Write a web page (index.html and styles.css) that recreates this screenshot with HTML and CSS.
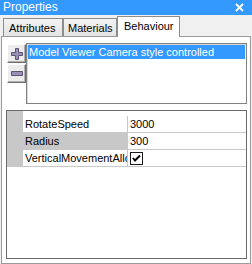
FILE: index.html
```html
<!DOCTYPE html>
<html>
<head>
<meta charset="utf-8">
<link rel="stylesheet" href="styles.css">
</head>
<body>
<div class="window">
  <div class="titlebar">
    <span class="title">Properties</span>
    <svg class="close" width="9" height="9" viewBox="0 0 9 9"><path d="M1 1 L8 8 M8 1 L1 8" stroke="#fff" stroke-width="1.8"/></svg>
  </div>
  <div class="tabstrip">
    <div class="tab t1">Attributes</div>
    <div class="tab t2">Materials</div>
    <div class="tab active">Behaviour</div>
  </div>
  <div class="page">
    <div class="top">
      <div class="buttons">
        <div class="btn">
          <svg width="12" height="12" viewBox="0 0 12 12"><path d="M4.5 0.5 H7.5 V4.5 H11.5 V7.5 H7.5 V11.5 H4.5 V7.5 H0.5 V4.5 H4.5 Z" fill="#9a8fb8" stroke="#5a5470" stroke-width="1"/></svg>
        </div>
        <div class="btn">
          <svg width="12" height="6" viewBox="0 0 12 6"><path d="M0.5 0.5 H11.5 V4.5 H0.5 Z" fill="#9a8fb8" stroke="#5a5470" stroke-width="1"/></svg>
        </div>
      </div>
      <div class="list">
        <div class="item selected">Model Viewer Camera style controlled</div>
      </div>
    </div>
    <div class="grid">
      <div class="row spacer"><div class="margin"></div><div class="name"></div><div class="value"></div></div>
      <div class="row"><div class="margin"></div><div class="name">RotateSpeed</div><div class="value">3000</div></div>
      <div class="row sel"><div class="margin"></div><div class="name">Radius</div><div class="value">300</div></div>
      <div class="row"><div class="margin"></div><div class="name">VerticalMovementAllowed</div><div class="value"><span class="check"><svg width="11" height="11" viewBox="0 0 11 11"><path d="M2 5 L4 7.5 L9 2.5" fill="none" stroke="#000" stroke-width="2"/></svg></span></div></div>
    </div>
  </div>
</div>
</body>
</html>
```
FILE: styles.css
```css
* { box-sizing: border-box; }
html, body { margin: 0; padding: 0; }
body {
  font-family: "Liberation Sans", Arial, sans-serif;
  font-size: 11px;
  color: #000;
  background: #f0f0f0;
}
.window {
  width: 252px;
  height: 264px;
  background: #f0f0f0;
  display: flex;
  flex-direction: column;
}
.titlebar {
  height: 15px;
  background: #3399ff;
  color: #fff;
  display: flex;
  align-items: center;
  justify-content: space-between;
  padding: 0 8px 0 3px;
}
.title { font-size: 12px; line-height: 15px; }
.close { display: block; }
.tabstrip {
  height: 21px;
  display: flex;
  align-items: flex-end;
  padding-left: 3px;
}
.tab {
  height: 18px;
  border: 1px solid #8c8c8c;
  border-bottom: none;
  background: linear-gradient(#f2f2f2, #e4e4e4);
  padding-top: 3px;
  line-height: 13px;
}
.t1 { width: 60px; padding-left: 5px; }
.t2 { width: 54px; padding-left: 4px; }
.tab.active {
  height: 21px;
  width: 63px;
  background: #fff;
  padding-left: 6px;
  padding-top: 3px;
  margin-bottom: -1px;
  position: relative;
  z-index: 1;
}
.page {
  margin: 0 1px;
  height: 228px;
  border: 1px solid #9a9a9a;
  background: #fff;
  padding: 6px 3px 0 4px;
}
.top {
  display: flex;
  height: 61px;
}
.buttons {
  width: 20px;
  padding-left: 1px;
  padding-top: 1px;
  display: flex;
  flex-direction: column;
  gap: 1px;
}
.btn {
  width: 19px;
  height: 19px;
  background: #ececec;
  border: 1px solid;
  border-color: #ffffff #6e6e6e #6e6e6e #ffffff;
  box-shadow: inset -1px -1px 0 #b0b0b0;
  display: flex;
  align-items: center;
  justify-content: center;
}
.list {
  flex: 1;
  border: 1px solid #828282;
  box-shadow: inset 1px 1px 0 #d8d8d8;
  background: #fff;
  padding: 1px 1px;
}
.item {
  height: 14px;
  line-height: 14px;
  padding-left: 1px;
}
.item.selected { background: #3399ff; color: #fff; }
.grid {
  margin-top: 6px;
  height: 149px;
  border: 1px solid #6a6a6a;
  background: #fff;
}
.row {
  display: flex;
  height: 17px;
}
.row.spacer { height: 5px; }
.row.spacer .name, .row.spacer .value { border: none; }
.margin {
  width: 16px;
  background: #c8c8c8;
}
.name {
  width: 105px;
  border-bottom: 1px solid #c8c8c8;
  border-right: 1px solid #c8c8c8;
  padding-left: 2px;
  line-height: 16px;
  white-space: nowrap;
  overflow: hidden;
}
.value {
  flex: 1;
  border-bottom: 1px solid #c8c8c8;
  padding-left: 2px;
  line-height: 16px;
  display: flex;
  align-items: center;
}
.row.sel .name { background: #c8c8c8; }
.check {
  width: 13px;
  height: 13px;
  border: 1px solid #1a1a1a;
  background: #fff;
  display: flex;
  align-items: center;
  justify-content: center;
}
.check svg { display: block; }
```
